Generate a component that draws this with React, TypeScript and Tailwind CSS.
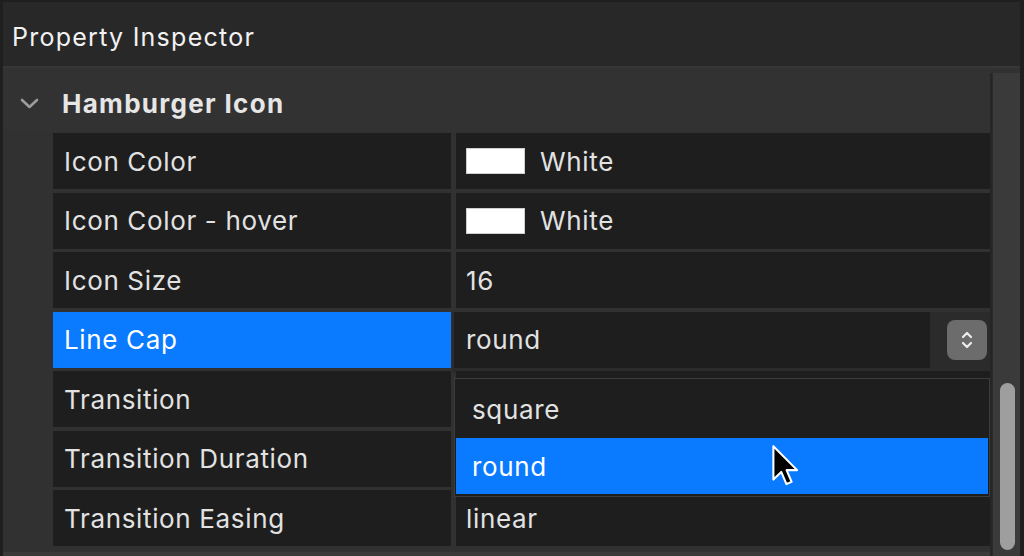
import React from "react";

const font = { fontFamily: "Inter, 'Noto Sans', 'Liberation Sans', sans-serif" };

function Swatch() {
  return <div className="w-[59px] h-[26px] bg-white border border-[#cfcfcf] shrink-0" />;
}

function Row({ label, children, selected }: { label: string; children?: React.ReactNode; selected?: boolean }) {
  return (
    <div className="flex h-[56px] gap-[5px]">
      <div
        className={
          "w-[398px] shrink-0 flex items-center pl-[11px] text-[26px] tracking-[0.025em] " +
          (selected ? "bg-[#0a7aff] text-white" : "bg-[#1e1e1e] text-[#e2e2e2]")
        }
      >
        {label}
      </div>
      {children}
    </div>
  );
}

function ValueCell({ children }: { children?: React.ReactNode }) {
  return (
    <div className="flex-1 bg-[#1e1e1e] flex items-center pl-[10px] text-[26px] text-[#e2e2e2] tracking-[0.025em]">
      {children}
    </div>
  );
}

export default function App() {
  return (
    <div
      className="relative w-[1024px] h-[556px] bg-[#1f1f1f] pt-[2px] pl-[3px] pr-[4px] flex flex-col overflow-hidden"
      style={font}
    >
      <div className="h-[64px] shrink-0 bg-[#282828] flex items-center pl-[9px] pt-[8px] text-[25px] tracking-[0.05em] text-[#f2f2f2]">
        Property Inspector
      </div>
      <div className="h-[2px] shrink-0 bg-[#373737]" />
      <div className="flex-1 flex bg-[#313131] min-h-0">
        <div className="flex-1 flex flex-col min-w-0">
          <div className="h-[64px] shrink-0 flex items-center pl-[17px] pt-[6px] bg-[#323232]">
            <svg width="19" height="11" viewBox="0 0 19 11" className="shrink-0">
              <path d="M2 2 L9.5 9 L17 2" fill="none" stroke="#9c9c9c" strokeWidth="2.6" strokeLinecap="round" strokeLinejoin="round" />
            </svg>
            <span className="ml-[23px] text-[26px] font-bold tracking-[0.05em] text-[#e6e6e6]">Hamburger Icon</span>
          </div>
          <div className="flex flex-col gap-[3.5px] pl-[50px] pt-[1px] flex-1">
            <Row label="Icon Color">
              <ValueCell>
                <Swatch />
                <span className="ml-[15px]">White</span>
              </ValueCell>
            </Row>
            <Row label="Icon Color - hover">
              <ValueCell>
                <Swatch />
                <span className="ml-[15px]">White</span>
              </ValueCell>
            </Row>
            <Row label="Icon Size">
              <ValueCell>16</ValueCell>
            </Row>
            <Row label="Line Cap" selected>
              <div className="flex-1 flex bg-[#2b2b2b] -ml-[4px] pl-[2px] pb-[5px] mb-[-5px]">
                <div className="flex-1 bg-[#1e1e1e] flex items-center pl-[12px] text-[26px] text-[#e2e2e2] tracking-[0.025em]">
                  round
                </div>
                <div className="w-[60px] flex items-center justify-end pr-[3px]">
                  <div className="w-[40px] h-[40px] rounded-[8px] bg-[#6c6c6c] flex items-center justify-center">
                    <svg width="14" height="22" viewBox="0 0 14 22">
                      <path d="M3 8 L7 4 L11 8" fill="none" stroke="#ececec" strokeWidth="2.2" strokeLinecap="round" strokeLinejoin="round" />
                      <path d="M3 14 L7 18 L11 14" fill="none" stroke="#ececec" strokeWidth="2.2" strokeLinecap="round" strokeLinejoin="round" />
                    </svg>
                  </div>
                </div>
              </div>
            </Row>
            <Row label="Transition">
              <ValueCell />
            </Row>
            <Row label="Transition Duration">
              <ValueCell />
            </Row>
            <Row label="Transition Easing">
              <ValueCell>linear</ValueCell>
            </Row>
          </div>
          <div className="h-[4px] shrink-0 bg-[#3a3a3a]" />
        </div>
        <div className="w-[2px] shrink-0 bg-[#262626] mt-[5px]" />
        <div className="w-[28px] shrink-0 bg-[#3a3a3a] mt-[5px] border-l border-[#2a2a2a] relative">
          <div className="absolute left-[7px] top-[310px] w-[15px] h-[167px] rounded-full bg-[#9e9e9e]" />
        </div>
      </div>

      {/* dropdown overlay */}
      <div className="absolute left-[454px] top-[378px] w-[536px] h-[119px] bg-[#1e1e1e] border border-[#3c3c3c] p-[1px] flex flex-col">
        <div className="h-[58px] flex items-center pl-[16px] text-[26px] text-[#e2e2e2] tracking-[0.025em]">square</div>
        <div className="h-[56px] bg-[#0a7aff] flex items-center pl-[16px] text-[26px] text-white tracking-[0.025em]">round</div>
      </div>

      {/* mouse cursor */}
      <svg className="absolute left-[771px] top-[444px]" width="30" height="46" viewBox="0 0 20 31">
        <path
          d="M1.5 1.5 L1.5 24 L6.8 18.8 L10.3 27 L13.8 25.5 L10.4 17.6 L17.5 17.6 Z"
          fill="#000"
          stroke="#fff"
          strokeWidth="1.4"
          strokeLinejoin="round"
        />
      </svg>
    </div>
  );
}
